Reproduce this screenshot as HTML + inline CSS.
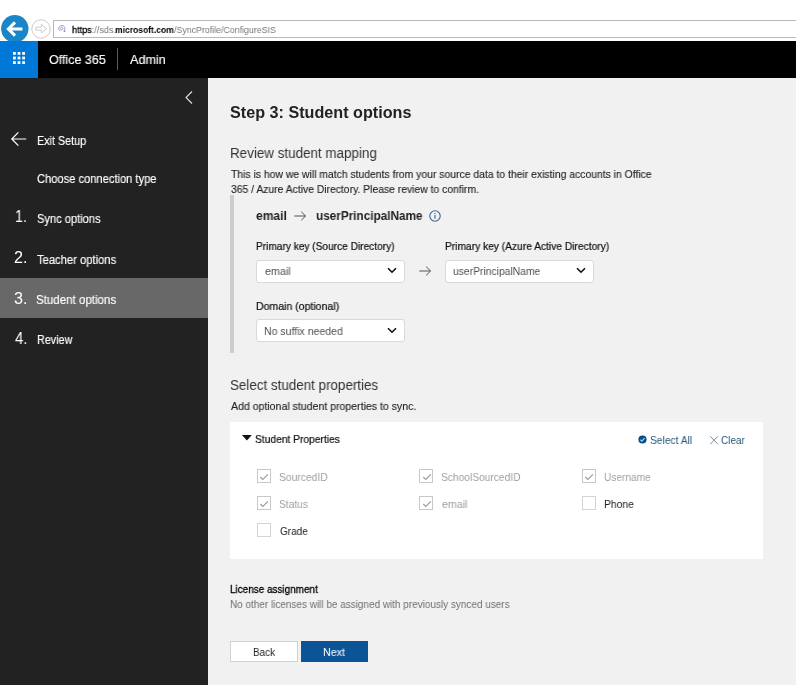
<!DOCTYPE html>
<html>
<head>
<meta charset="utf-8">
<title>ConfigureSIS</title>
<style>
html,body{margin:0;padding:0;}
body{width:796px;height:685px;position:relative;overflow:hidden;background:#fff;font-family:"Liberation Sans",sans-serif;color:#222;}
.abs{position:absolute;}
.t{position:absolute;white-space:nowrap;line-height:1;transform-origin:0 0;will-change:transform;}
svg{position:absolute;overflow:visible;}
#urlbox{left:52.6px;top:20.4px;width:760px;height:17.2px;border:1px solid #b8b8b8;box-sizing:border-box;background:#fff;}
#hdr{left:0;top:41px;width:796px;height:37px;background:#000;}
#waffle{left:0;top:41px;width:38px;height:37px;background:#0078d7;}
#hdiv{left:117px;top:48px;width:1px;height:22px;background:#5c5c5c;}
#side{left:0;top:78px;width:208px;height:607px;background:#222;}
#active{left:0;top:278px;width:208px;height:40px;background:#686868;}
#main{left:208px;top:78px;width:588px;height:607px;background:#f1f1f1;}
#bar{left:230px;top:195px;width:4px;height:158px;background:#cdcdcd;}
.sel{height:23.3px;width:149px;background:#fff;border:1px solid #d9d9d9;border-radius:3px;box-sizing:border-box;}
#panel{left:230px;top:421.5px;width:533.2px;height:137.3px;background:#fff;}
.cb{width:14.2px;height:14.3px;border:1px solid #c8c8c8;box-sizing:border-box;background:#fff;}
#back{left:230.3px;top:640.5px;width:67.7px;height:21.8px;background:#fff;border:1px solid #d2d2d2;box-sizing:border-box;}
#next{left:301.2px;top:640.8px;width:66.5px;height:21.5px;background:#0b5596;}
</style>
</head>
<body>

<div class="abs" id="urlbox"></div>
<svg width="29" height="29" style="left:0;top:14px" viewBox="0 0 29 29">
  <circle cx="14.8" cy="14.7" r="13.7" fill="#1a86c8"/>
  <path d="M8.6 15 H22.4 M15 8.4 L8.4 15 L15 21.6" fill="none" stroke="#fff" stroke-width="3"/>
</svg>
<svg width="20" height="20" style="left:31px;top:19.3px" viewBox="0 0 20 20">
  <circle cx="10" cy="10" r="9.2" fill="#fff" stroke="#c9c2bd" stroke-width="0.9"/>
  <path d="M4.8 8.2 H10.3 V5.4 L15.6 9.7 L10.3 14 V11.2 H4.8 Z" fill="#fff" stroke="#c8c8c8" stroke-width="0.9"/>
</svg>
<svg width="8" height="7" style="left:57.8px;top:25.3px" viewBox="0 0 8 7">
  <path d="M2.2 6.2 A3.1 3.1 0 1 1 5.4 6.3" fill="none" stroke="#a58ccc" stroke-width="0.9"/>
  <ellipse cx="3.7" cy="3.6" rx="1.1" ry="1.6" fill="none" stroke="#a58ccc" stroke-width="0.8"/>
  <rect x="6" y="5.6" width="1.2" height="1" fill="#5a4a78"/>
</svg>
<div class="abs" id="hdr"></div>
<div class="abs" id="waffle"></div>
<svg width="12" height="12" style="left:12.5px;top:51.5px" viewBox="0 0 12 12" fill="#fff">
  <rect x="0" y="0" width="2.8" height="2.8"/><rect x="4.6" y="0" width="2.8" height="2.8"/><rect x="9.2" y="0" width="2.8" height="2.8"/>
  <rect x="0" y="4.6" width="2.8" height="2.8"/><rect x="4.6" y="4.6" width="2.8" height="2.8"/><rect x="9.2" y="4.6" width="2.8" height="2.8"/>
  <rect x="0" y="9.2" width="2.8" height="2.8"/><rect x="4.6" y="9.2" width="2.8" height="2.8"/><rect x="9.2" y="9.2" width="2.8" height="2.8"/>
</svg>
<div class="abs" id="hdiv"></div>
<div class="abs" id="side"></div>
<div class="abs" id="active"></div>
<svg width="8" height="14" style="left:185px;top:91px" viewBox="0 0 8 14">
  <path d="M7 0.5 L1 6.5 L7 12.5" fill="none" stroke="#e0e0e0" stroke-width="1.1"/>
</svg>
<svg width="16" height="14" style="left:10.8px;top:132.1px" viewBox="0 0 16 14">
  <path d="M0.8 7 H15.2 M7.4 0.3 L0.8 7 L7.4 13.7" fill="none" stroke="#fff" stroke-width="1.2"/>
</svg>
<div class="abs" id="main"></div>
<div class="abs" id="bar"></div>
<svg width="13" height="10" style="left:294px;top:211.3px" viewBox="0 0 13 10"><path d="M0.3 5 H11.6 M7.2 0.7 L11.6 5 L7.2 9.3" fill="none" stroke="#555" stroke-width="1"/></svg>

<svg width="12" height="12" style="left:428.9px;top:209.7px" viewBox="0 0 12 12">
  <circle cx="6" cy="6" r="5.2" fill="#f0f6fb" stroke="#3d6289" stroke-width="1.1"/>
  <rect x="5.5" y="4.9" width="1" height="3.9" fill="#2f4a66"/>
  <rect x="5.5" y="3" width="1" height="1.1" fill="#2f4a66"/>
</svg>
<div class="abs sel" style="left:256px;top:259.7px"></div>
<div class="abs sel" style="left:445px;top:259.7px"></div>
<div class="abs sel" style="left:256px;top:319px"></div>
<svg width="10" height="7" style="left:387px;top:267px" viewBox="0 0 10 7"><path d="M1 1.2 L5 5.2 L9 1.2" fill="none" stroke="#111" stroke-width="1.6"/></svg>
<svg width="10" height="7" style="left:576px;top:267px" viewBox="0 0 10 7"><path d="M1 1.2 L5 5.2 L9 1.2" fill="none" stroke="#111" stroke-width="1.6"/></svg>
<svg width="10" height="7" style="left:387px;top:327px" viewBox="0 0 10 7"><path d="M1 1.2 L5 5.2 L9 1.2" fill="none" stroke="#111" stroke-width="1.6"/></svg>
<svg width="13" height="10" style="left:419px;top:266.3px" viewBox="0 0 13 10"><path d="M0.3 5 H11.6 M7.2 0.7 L11.6 5 L7.2 9.3" fill="none" stroke="#555" stroke-width="1"/></svg>

<div class="abs" id="panel"></div>
<svg width="10" height="6" style="left:242.4px;top:435.3px" viewBox="0 0 10 6"><path d="M0 0 H9.8 L4.9 5.6 Z" fill="#111"/></svg>
<svg width="9" height="9" style="left:638.1px;top:435.3px" viewBox="0 0 9 9">
  <circle cx="4.5" cy="4.5" r="4.1" fill="#0d4c84"/>
  <path d="M2.4 4.7 L3.9 6.1 L6.6 3.1" fill="none" stroke="#8fd0ff" stroke-width="1.3"/>
</svg>
<svg width="9" height="9" style="left:709.8px;top:435.6px" viewBox="0 0 9 9">
  <path d="M0.3 0.3 L7.9 8.1 M7.9 0.3 L0.3 8.1" fill="none" stroke="#6b8096" stroke-width="0.9"/>
</svg>
<div class="abs cb" style="left:257px;top:469.1px"></div>
<div class="abs cb" style="left:257px;top:496.1px"></div>
<div class="abs cb" style="left:257px;top:523.2px;border-color:#d4d4d4"></div>
<div class="abs cb" style="left:419px;top:469.1px"></div>
<div class="abs cb" style="left:419px;top:496.1px"></div>
<div class="abs cb" style="left:582.3px;top:469.1px"></div>
<div class="abs cb" style="left:582.3px;top:496.1px;border-color:#d4d4d4"></div>
<svg width="9" height="7" style="left:259.9px;top:473.9px" viewBox="0 0 9 7"><path d="M0.3 3 L2.8 5.5 L7.9 0.3" fill="none" stroke="#9a9a9a" stroke-width="1.1"/></svg>
<svg width="9" height="7" style="left:259.9px;top:500.9px" viewBox="0 0 9 7"><path d="M0.3 3 L2.8 5.5 L7.9 0.3" fill="none" stroke="#9a9a9a" stroke-width="1.1"/></svg>
<svg width="9" height="7" style="left:422.7px;top:473.9px" viewBox="0 0 9 7"><path d="M0.3 3 L2.8 5.5 L7.9 0.3" fill="none" stroke="#9a9a9a" stroke-width="1.1"/></svg>
<svg width="9" height="7" style="left:422.7px;top:500.9px" viewBox="0 0 9 7"><path d="M0.3 3 L2.8 5.5 L7.9 0.3" fill="none" stroke="#9a9a9a" stroke-width="1.1"/></svg>
<svg width="9" height="7" style="left:585.4px;top:473.9px" viewBox="0 0 9 7"><path d="M0.3 3 L2.8 5.5 L7.9 0.3" fill="none" stroke="#9a9a9a" stroke-width="1.1"/></svg>

<div class="abs" id="back"></div>
<div class="abs" id="next"></div>
<div class="t" style="left:71.65px;top:25.00px;font-size:9.8px;color:#777;font-weight:normal;transform:scaleX(0.9284);"><span style="color:#000;-webkit-text-stroke:0.3px #000">https</span>://sds.</div>
<div class="t" style="left:114.71px;top:25.00px;font-size:9.8px;color:#000;font-weight:bold;transform:scaleX(0.8707);">microsoft.com</div>
<div class="t" style="left:173.78px;top:25.00px;font-size:9.8px;color:#777;font-weight:normal;transform:scaleX(0.8992);">/SyncProfile/ConfigureSIS</div>
<div class="t" style="left:48.75px;top:52.60px;font-size:13px;color:#fff;font-weight:normal;transform:scaleX(0.9624);-webkit-text-stroke:0.15px #fff;">Office 365</div>
<div class="t" style="left:129.58px;top:52.60px;font-size:13px;color:#fff;font-weight:normal;transform:scaleX(0.9722);-webkit-text-stroke:0.15px #fff;">Admin</div>
<div class="t" style="left:36.73px;top:134.54px;font-size:12px;color:#fff;font-weight:normal;transform:scaleX(0.8991);-webkit-text-stroke:0.15px #fff;">Exit Setup</div>
<div class="t" style="left:36.69px;top:172.84px;font-size:12px;color:#fff;font-weight:normal;transform:scaleX(0.9279);-webkit-text-stroke:0.15px #fff;">Choose connection type</div>
<div class="t" style="left:14.55px;top:209.46px;font-size:16px;color:#fff;font-weight:normal;transform:scaleX(0.8887);">1.</div>
<div class="t" style="left:36.69px;top:212.84px;font-size:12px;color:#fff;font-weight:normal;transform:scaleX(0.9252);-webkit-text-stroke:0.15px #fff;">Sync options</div>
<div class="t" style="left:13.60px;top:250.46px;font-size:16px;color:#fff;font-weight:normal;transform:scaleX(1.0128);">2.</div>
<div class="t" style="left:36.72px;top:253.84px;font-size:12px;color:#fff;font-weight:normal;transform:scaleX(0.9345);-webkit-text-stroke:0.15px #fff;">Teacher options</div>
<div class="t" style="left:13.60px;top:290.96px;font-size:16px;color:#fff;font-weight:normal;transform:scaleX(1.0128);">3.</div>
<div class="t" style="left:35.77px;top:294.34px;font-size:12px;color:#fff;font-weight:normal;transform:scaleX(0.9603);-webkit-text-stroke:0.15px #fff;">Student options</div>
<div class="t" style="left:14.68px;top:330.96px;font-size:16px;color:#fff;font-weight:normal;transform:scaleX(0.9331);">4.</div>
<div class="t" style="left:36.75px;top:334.34px;font-size:12px;color:#fff;font-weight:normal;transform:scaleX(0.8990);-webkit-text-stroke:0.15px #fff;">Review</div>
<div class="t" style="left:229.61px;top:104.76px;font-size:16px;color:#222;font-weight:bold;transform:scaleX(1.0102);">Step 3: Student options</div>
<div class="t" style="left:229.67px;top:146.05px;font-size:14px;color:#333;font-weight:normal;transform:scaleX(0.9581);">Review student mapping</div>
<div class="t" style="left:230.64px;top:168.86px;font-size:10.8px;color:#222;font-weight:normal;transform:scaleX(0.9618);-webkit-text-stroke:0.12px;">This is how we will match students from your source data to their existing accounts in Office</div>
<div class="t" style="left:230.73px;top:183.86px;font-size:10.8px;color:#222;font-weight:normal;transform:scaleX(0.9594);-webkit-text-stroke:0.12px;">365 / Azure Active Directory. Please review to confirm.</div>
<div class="t" style="left:255.73px;top:210.42px;font-size:12.5px;color:#222;font-weight:bold;transform:scaleX(0.9653);">email</div>
<div class="t" style="left:315.69px;top:210.42px;font-size:12.5px;color:#222;font-weight:bold;transform:scaleX(0.9402);">userPrincipalName</div>
<div class="t" style="left:255.61px;top:240.69px;font-size:11px;color:#111;font-weight:normal;transform:scaleX(0.9214);-webkit-text-stroke:0.22px;">Primary key (Source Directory)</div>
<div class="t" style="left:444.60px;top:240.69px;font-size:11px;color:#111;font-weight:normal;transform:scaleX(0.9293);-webkit-text-stroke:0.22px;">Primary key (Azure Active Directory)</div>
<div class="t" style="left:264.60px;top:265.69px;font-size:11px;color:#505050;font-weight:normal;transform:scaleX(0.9793);">email</div>
<div class="t" style="left:452.60px;top:265.69px;font-size:11px;color:#505050;font-weight:normal;transform:scaleX(0.9391);">userPrincipalName</div>
<div class="t" style="left:255.56px;top:300.69px;font-size:11px;color:#111;font-weight:normal;transform:scaleX(0.9574);-webkit-text-stroke:0.22px;">Domain (optional)</div>
<div class="t" style="left:263.66px;top:325.69px;font-size:11px;color:#505050;font-weight:normal;transform:scaleX(0.9573);">No suffix needed</div>
<div class="t" style="left:229.66px;top:378.35px;font-size:14px;color:#333;font-weight:normal;transform:scaleX(0.9567);">Select student properties</div>
<div class="t" style="left:230.68px;top:400.86px;font-size:10.8px;color:#222;font-weight:normal;transform:scaleX(0.9771);-webkit-text-stroke:0.12px;">Add optional student properties to sync.</div>
<div class="t" style="left:254.69px;top:434.09px;font-size:11px;color:#111;font-weight:normal;transform:scaleX(0.9314);-webkit-text-stroke:0.22px;">Student Properties</div>
<div class="t" style="left:649.60px;top:434.69px;font-size:11px;color:#25587a;font-weight:normal;transform:scaleX(0.9322);">Select All</div>
<div class="t" style="left:720.53px;top:434.69px;font-size:11px;color:#25587a;font-weight:normal;transform:scaleX(0.9052);">Clear</div>
<div class="t" style="left:278.79px;top:472.09px;font-size:11px;color:#9f9f9f;font-weight:normal;transform:scaleX(0.9373);">SourcedID</div>
<div class="t" style="left:278.53px;top:498.99px;font-size:11px;color:#9f9f9f;font-weight:normal;transform:scaleX(0.9259);">Status</div>
<div class="t" style="left:279.57px;top:526.29px;font-size:11px;color:#222;font-weight:normal;transform:scaleX(0.9106);">Grade</div>
<div class="t" style="left:440.60px;top:472.09px;font-size:11px;color:#9f9f9f;font-weight:normal;transform:scaleX(0.9286);">SchoolSourcedID</div>
<div class="t" style="left:441.59px;top:498.99px;font-size:11px;color:#9f9f9f;font-weight:normal;transform:scaleX(0.9714);">email</div>
<div class="t" style="left:603.61px;top:472.09px;font-size:11px;color:#9f9f9f;font-weight:normal;transform:scaleX(0.9226);">Username</div>
<div class="t" style="left:603.59px;top:498.99px;font-size:11px;color:#222;font-weight:normal;transform:scaleX(0.9392);">Phone</div>
<div class="t" style="left:229.73px;top:583.79px;font-size:11px;color:#000;font-weight:normal;transform:scaleX(0.9024);-webkit-text-stroke:0.3px;">License assignment</div>
<div class="t" style="left:229.61px;top:599.36px;font-size:10.8px;color:#6f6f6f;font-weight:normal;transform:scaleX(0.9225);">No other licenses will be assigned with previously synced users</div>
<div class="t" style="left:252.64px;top:646.69px;font-size:11px;color:#222;font-weight:normal;transform:scaleX(0.8991);">Back</div>
<div class="t" style="left:322.64px;top:646.69px;font-size:11px;color:#fff;font-weight:normal;transform:scaleX(0.9739);">Next</div>
</body>
</html>
